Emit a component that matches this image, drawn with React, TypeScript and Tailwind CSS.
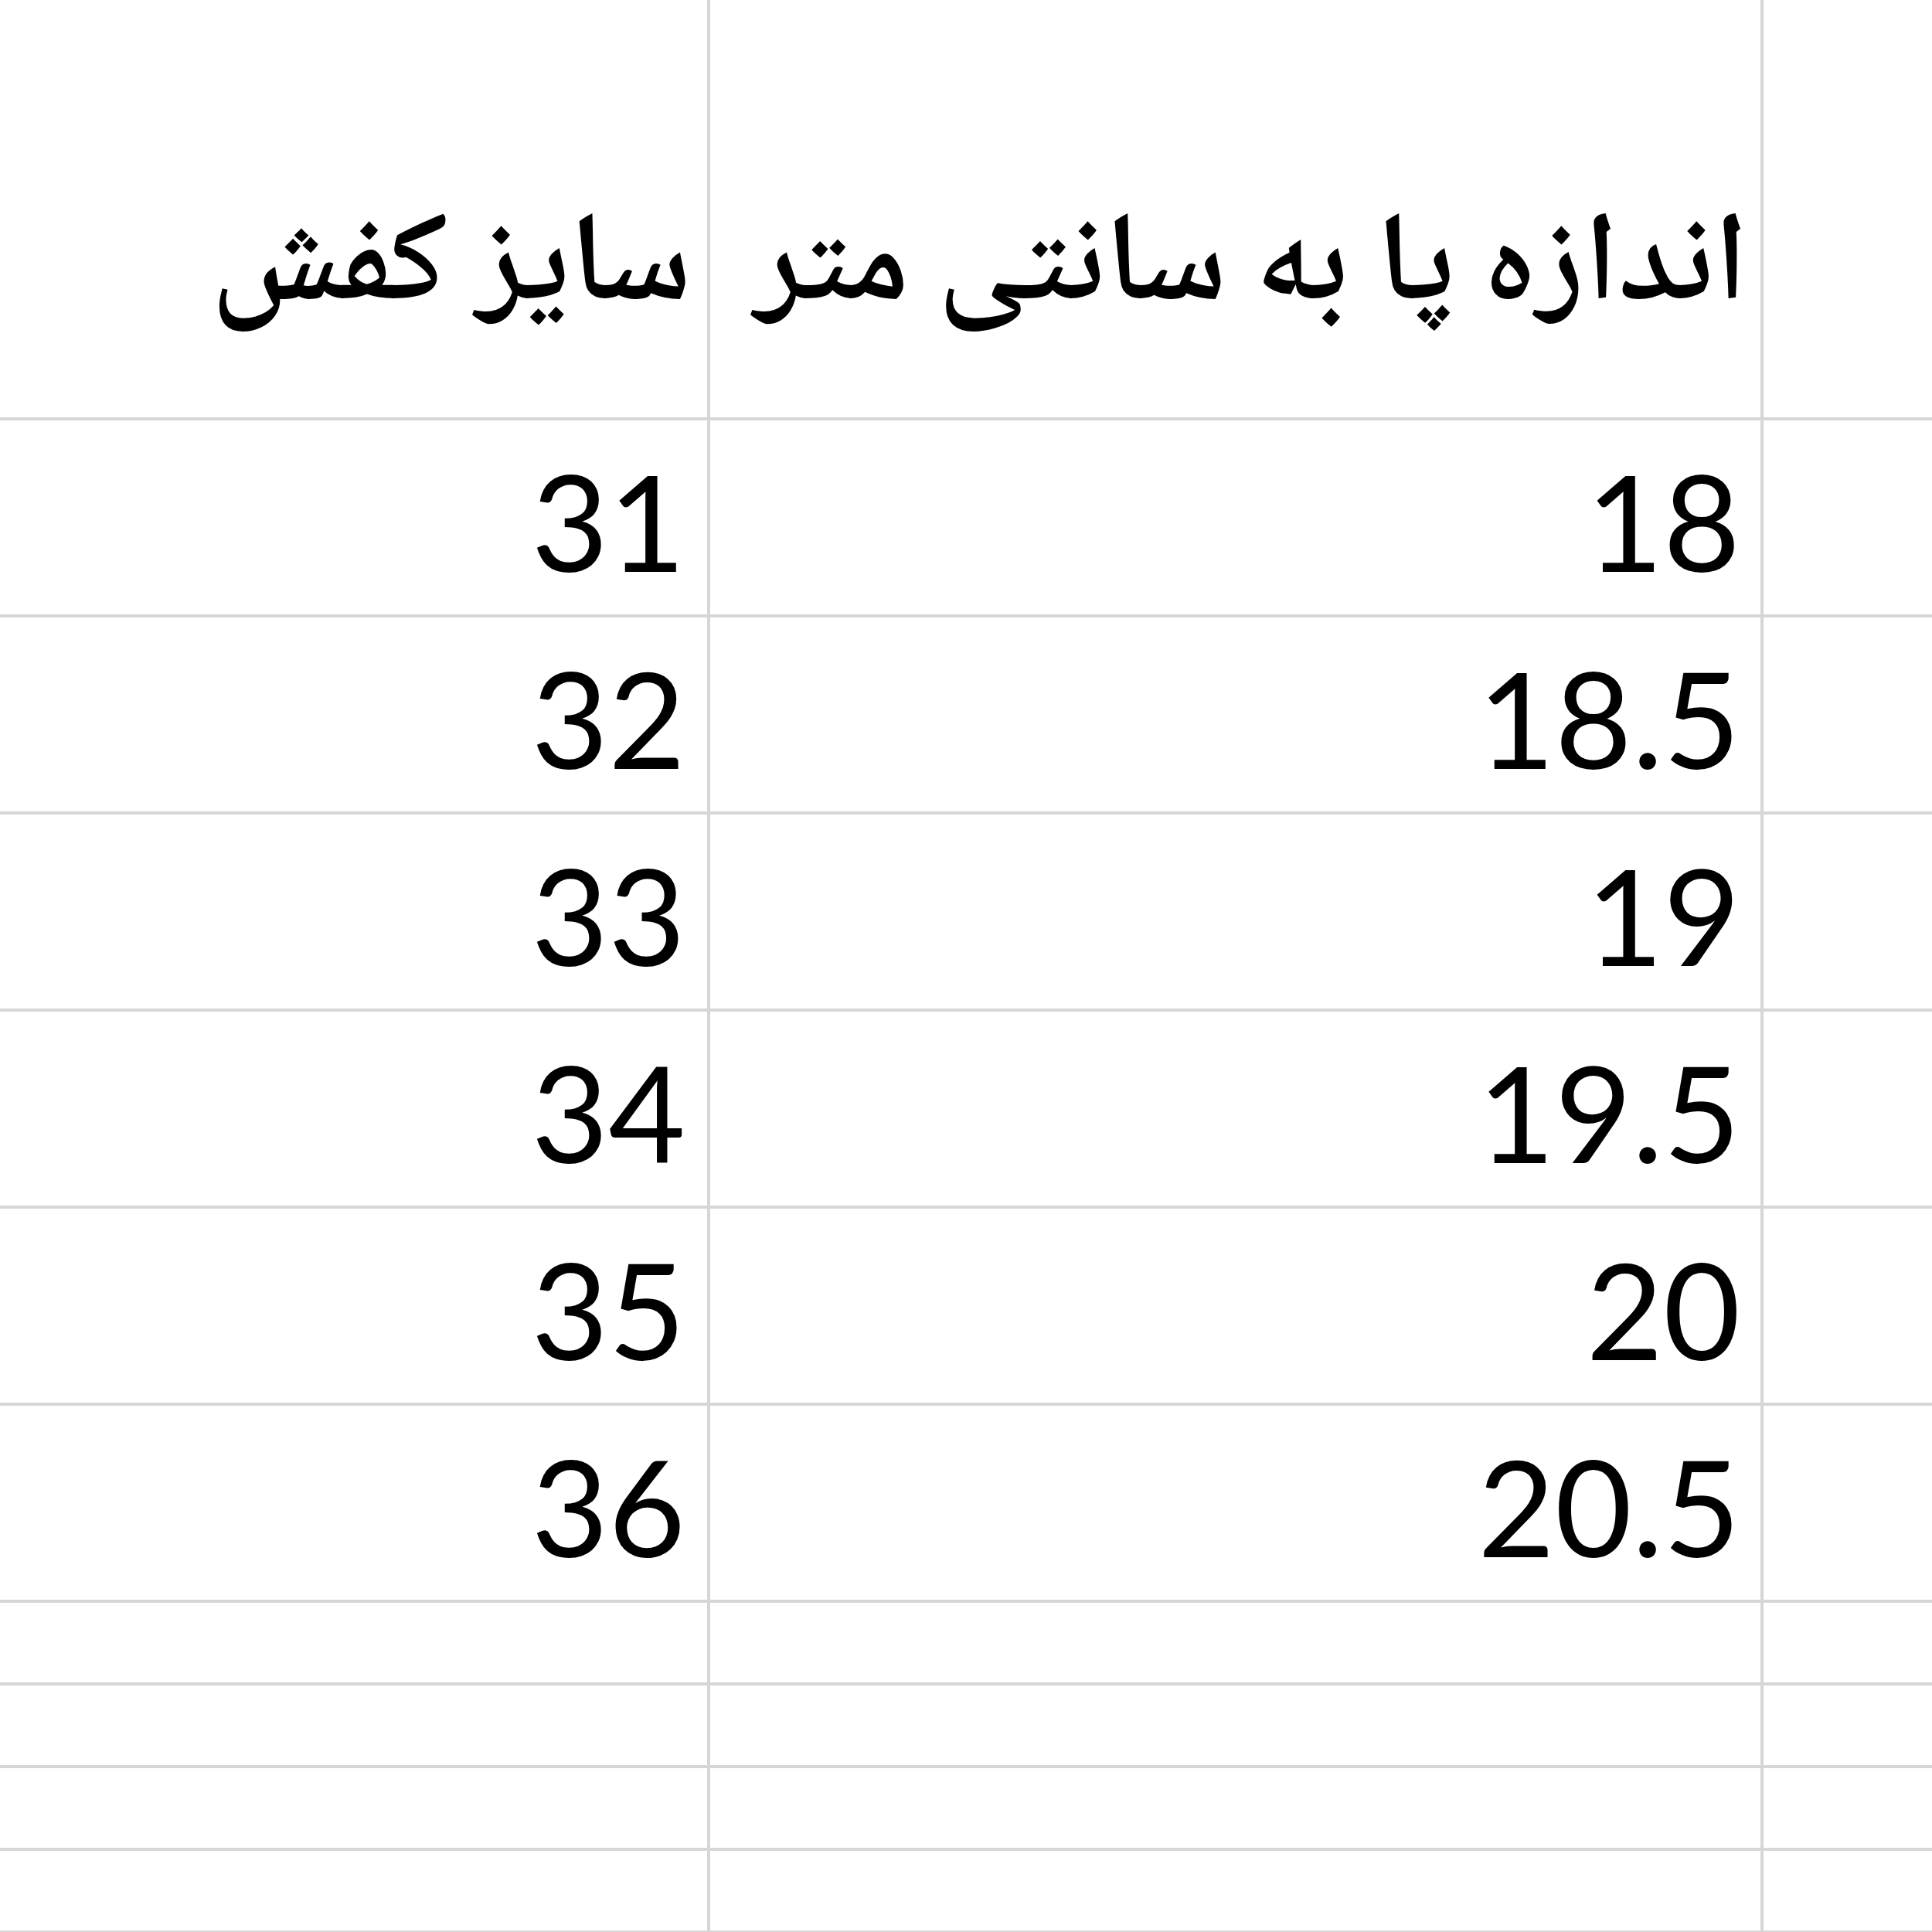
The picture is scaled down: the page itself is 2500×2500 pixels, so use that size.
import React from 'react';

const sizes: [string, string][] = [
  ['31', '18'],
  ['32', '18.5'],
  ['33', '19'],
  ['34', '19.5'],
  ['35', '20'],
  ['36', '20.5'],
];

const digitFont = { fontFamily: 'Lato, "Open Sans", sans-serif' };
const arabicFont = { fontFamily: '"Noto Naskh Arabic", "Noto Sans Arabic", "DejaVu Sans", sans-serif' };

function NumCell({ value, className, pad }: { value: string; className: string; pad: string }) {
  return (
    <div className={`${className} ${pad} flex items-end justify-end border-r-4 border-b-4 border-[#d6d6d6] pb-[35px]`}>
      <span className="text-[172px] leading-none text-black" style={digitFont}>{value}</span>
    </div>
  );
}

export default function App(): React.ReactElement {
  return (
    <div className="w-[2500px] h-[2500px] overflow-hidden bg-white">
      {/* header row */}
      <div className="flex h-[544px]">
        <div className="w-[919px] flex items-end justify-end border-r-4 border-b-4 border-[#d6d6d6] pr-[20px] pb-[106px]">
          <span dir="rtl" className="text-[164px] font-semibold leading-none text-black whitespace-nowrap" style={arabicFont}>سایز کفش</span>
        </div>
        <div className="w-[1363px] flex items-end justify-end border-r-4 border-b-4 border-[#d6d6d6] pr-[16px] pb-[106px]">
          <span dir="rtl" className="text-[164px] font-semibold leading-none text-black whitespace-nowrap" style={arabicFont}>اندازه پا به سانتی متر</span>
        </div>
        <div className="flex-1 border-b-4 border-[#d6d6d6]" />
      </div>

      {sizes.map(([shoe, foot]) => (
        <div key={shoe} className="flex h-[255px]">
          <NumCell value={shoe} className="w-[919px]" pad="pr-[28px]" />
          <NumCell value={foot} className="w-[1363px]" pad="pr-[26px]" />
          <div className="flex-1 border-b-4 border-[#d6d6d6]" />
        </div>
      ))}

      {[0, 1, 2, 3].map((i) => (
        <div key={i} className="flex h-[107px]">
          <div className="w-[919px] border-r-4 border-b-4 border-[#d6d6d6]" />
          <div className="w-[1363px] border-r-4 border-b-4 border-[#d6d6d6]" />
          <div className="flex-1 border-b-4 border-[#d6d6d6]" />
        </div>
      ))}
    </div>
  );
}
